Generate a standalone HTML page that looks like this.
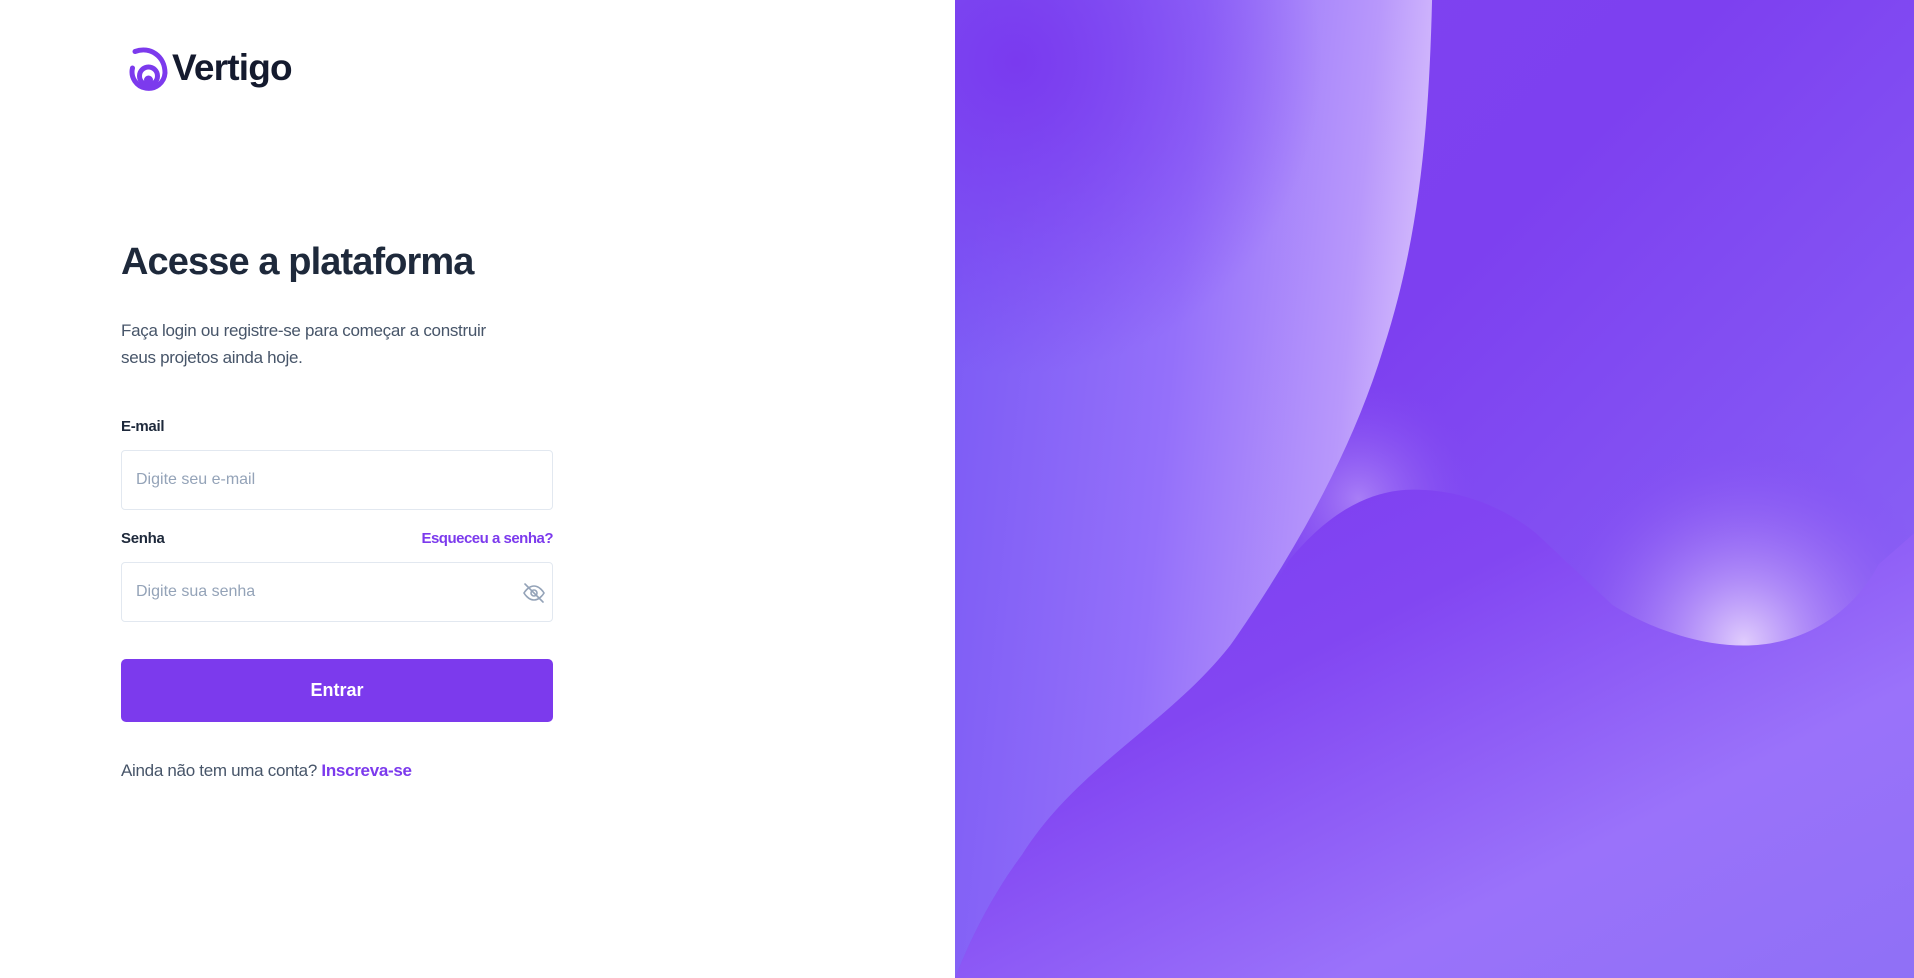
<!DOCTYPE html>
<html><head><meta charset="utf-8"><style>
*{margin:0;padding:0;box-sizing:border-box}
html,body{width:1914px;height:978px;overflow:hidden;background:#fff;font-family:"Liberation Sans",sans-serif}
.left{position:absolute;left:0;top:0;width:955px;height:978px;background:#fff}
.right{position:absolute;left:955px;top:0;width:959px;height:978px;overflow:hidden;background:#7e42f0}
.logo{position:absolute;left:128px;top:45px;display:flex;align-items:center}
.logo span{font-weight:bold;font-size:37px;color:#141a2e;letter-spacing:-0.8px;margin-left:4px}
h1{position:absolute;left:121px;top:241px;font-size:38px;font-weight:bold;color:#1e293b;letter-spacing:-0.9px;white-space:nowrap}
.sub{position:absolute;left:121px;top:317px;font-size:17px;line-height:27px;color:#475569;letter-spacing:-0.3px;width:385px}
.lbl{position:absolute;left:121px;font-size:15px;font-weight:bold;color:#1e293b;letter-spacing:-0.3px}
.inp{position:absolute;left:121px;width:432px;height:60px;border:1px solid #e2e8f0;border-radius:4px;font-size:16px;color:#94a3b8;padding-left:14px;line-height:58px}
.forgot{position:absolute;left:253px;width:300px;text-align:right;top:530px;font-size:15px;font-weight:bold;color:#7c3aed;letter-spacing:-0.5px;white-space:nowrap}
.btn{position:absolute;left:121px;top:659px;width:432px;height:63px;background:#7c3aed;border-radius:5px;color:#fff;font-weight:bold;font-size:18px;text-align:center;line-height:63px}
.foot{position:absolute;left:121px;top:761px;font-size:17px;color:#475569;letter-spacing:-0.3px}
.foot b{color:#7c3aed}
</style></head><body>
<div class="left">
<div class="logo">
<svg width="40" height="46" viewBox="0 0 40 46">
<path d="M7 6.5 C22 1 37 11 37 28 A16.5 16.5 0 1 1 4.5 23" fill="none" stroke="#7c3aed" stroke-width="5" stroke-linecap="round"/>
<circle cx="20.5" cy="31" r="9" fill="none" stroke="#7c3aed" stroke-width="5"/>
<circle cx="20.5" cy="35" r="4.5" fill="#7c3aed"/>
</svg>
<span>Vertigo</span></div>
<h1>Acesse a plataforma</h1>
<div class="sub">Faça login ou registre-se para começar a construir seus projetos ainda hoje.</div>
<div class="lbl" style="top:418px">E-mail</div>
<div class="inp" style="top:450px">Digite seu e-mail</div>
<div class="lbl" style="top:530px">Senha</div>
<div class="forgot">Esqueceu a senha?</div>
<div class="inp" style="top:562px">Digite sua senha
<svg style="position:absolute;left:400px;top:18px" width="24" height="24" viewBox="0 0 24 24" fill="none" stroke="#94a3b8" stroke-width="1.6" stroke-linecap="round"><path d="M2 12s4-7 10-7 10 7 10 7-4 7-10 7S2 12 2 12z"/><circle cx="12" cy="12" r="3"/><path d="M3 3l18 18"/></svg>
</div>
<div class="btn">Entrar</div>
<div class="foot">Ainda não tem uma conta? <b>Inscreva-se</b></div>
</div>
<div class="right">
<svg width="959" height="978" viewBox="0 0 1568 1568" preserveAspectRatio="none">
<defs>
<linearGradient id="bg" x1="0" y1="0" x2="1" y2="1"><stop offset="0" stop-color="#7f44f0"/><stop offset="0.4" stop-color="#7d40f0"/><stop offset="0.7" stop-color="#8558f4"/><stop offset="1" stop-color="#9070f5"/></linearGradient>
<radialGradient id="glow" cx="1290" cy="1030" r="330" gradientUnits="userSpaceOnUse"><stop offset="0" stop-color="#e0ccfd"/><stop offset="0.3" stop-color="#b896f9" stop-opacity="0.85"/><stop offset="1" stop-color="#8048f0" stop-opacity="0"/></radialGradient>
<radialGradient id="glow2" cx="660" cy="800" r="200" gradientUnits="userSpaceOnUse"><stop offset="0" stop-color="#b28cf8" stop-opacity="0.8"/><stop offset="1" stop-color="#8048f0" stop-opacity="0"/></radialGradient>
<radialGradient id="tl" cx="100" cy="100" r="500" gradientUnits="userSpaceOnUse"><stop offset="0" stop-color="#7a3aef"/><stop offset="1" stop-color="#7a3aef" stop-opacity="0"/></radialGradient>
<linearGradient id="ls" x1="0" y1="0.3" x2="1" y2="0.5"><stop offset="0" stop-color="#7d5cf5"/><stop offset="0.45" stop-color="#9470fa"/><stop offset="0.8" stop-color="#b898fb"/><stop offset="1" stop-color="#e0cafd"/></linearGradient>
<linearGradient id="bl" x1="0" y1="0" x2="1" y2="1"><stop offset="0" stop-color="#7c3cf0"/><stop offset="0.35" stop-color="#8246f2"/><stop offset="0.7" stop-color="#9a72fa"/><stop offset="1" stop-color="#8f70f6"/></linearGradient>
</defs>
<rect width="1568" height="1568" fill="url(#bg)"/>
<rect width="1568" height="1568" fill="url(#glow)"/>
<rect width="1568" height="1568" fill="url(#glow2)"/>
<path d="M0 0 L780 0 C775 200 760 380 700 560 C650 720 560 880 450 1035 C350 1160 200 1230 110 1370 C50 1450 20 1520 0 1568 Z" fill="url(#ls)"/>
<path d="M0 0 L780 0 L780 700 L0 700 Z" fill="url(#tl)"/>
<path d="M0 1568 C20 1520 50 1450 110 1370 C200 1230 350 1160 450 1035 C500 970 530 930 545 900 C620 810 690 785 750 785 C830 785 900 815 950 855 L1075 970 C1140 1010 1220 1035 1290 1035 C1390 1035 1470 980 1510 905 L1568 855 L1568 1568 Z" fill="url(#bl)"/>
</svg>
</div>
</body></html>
